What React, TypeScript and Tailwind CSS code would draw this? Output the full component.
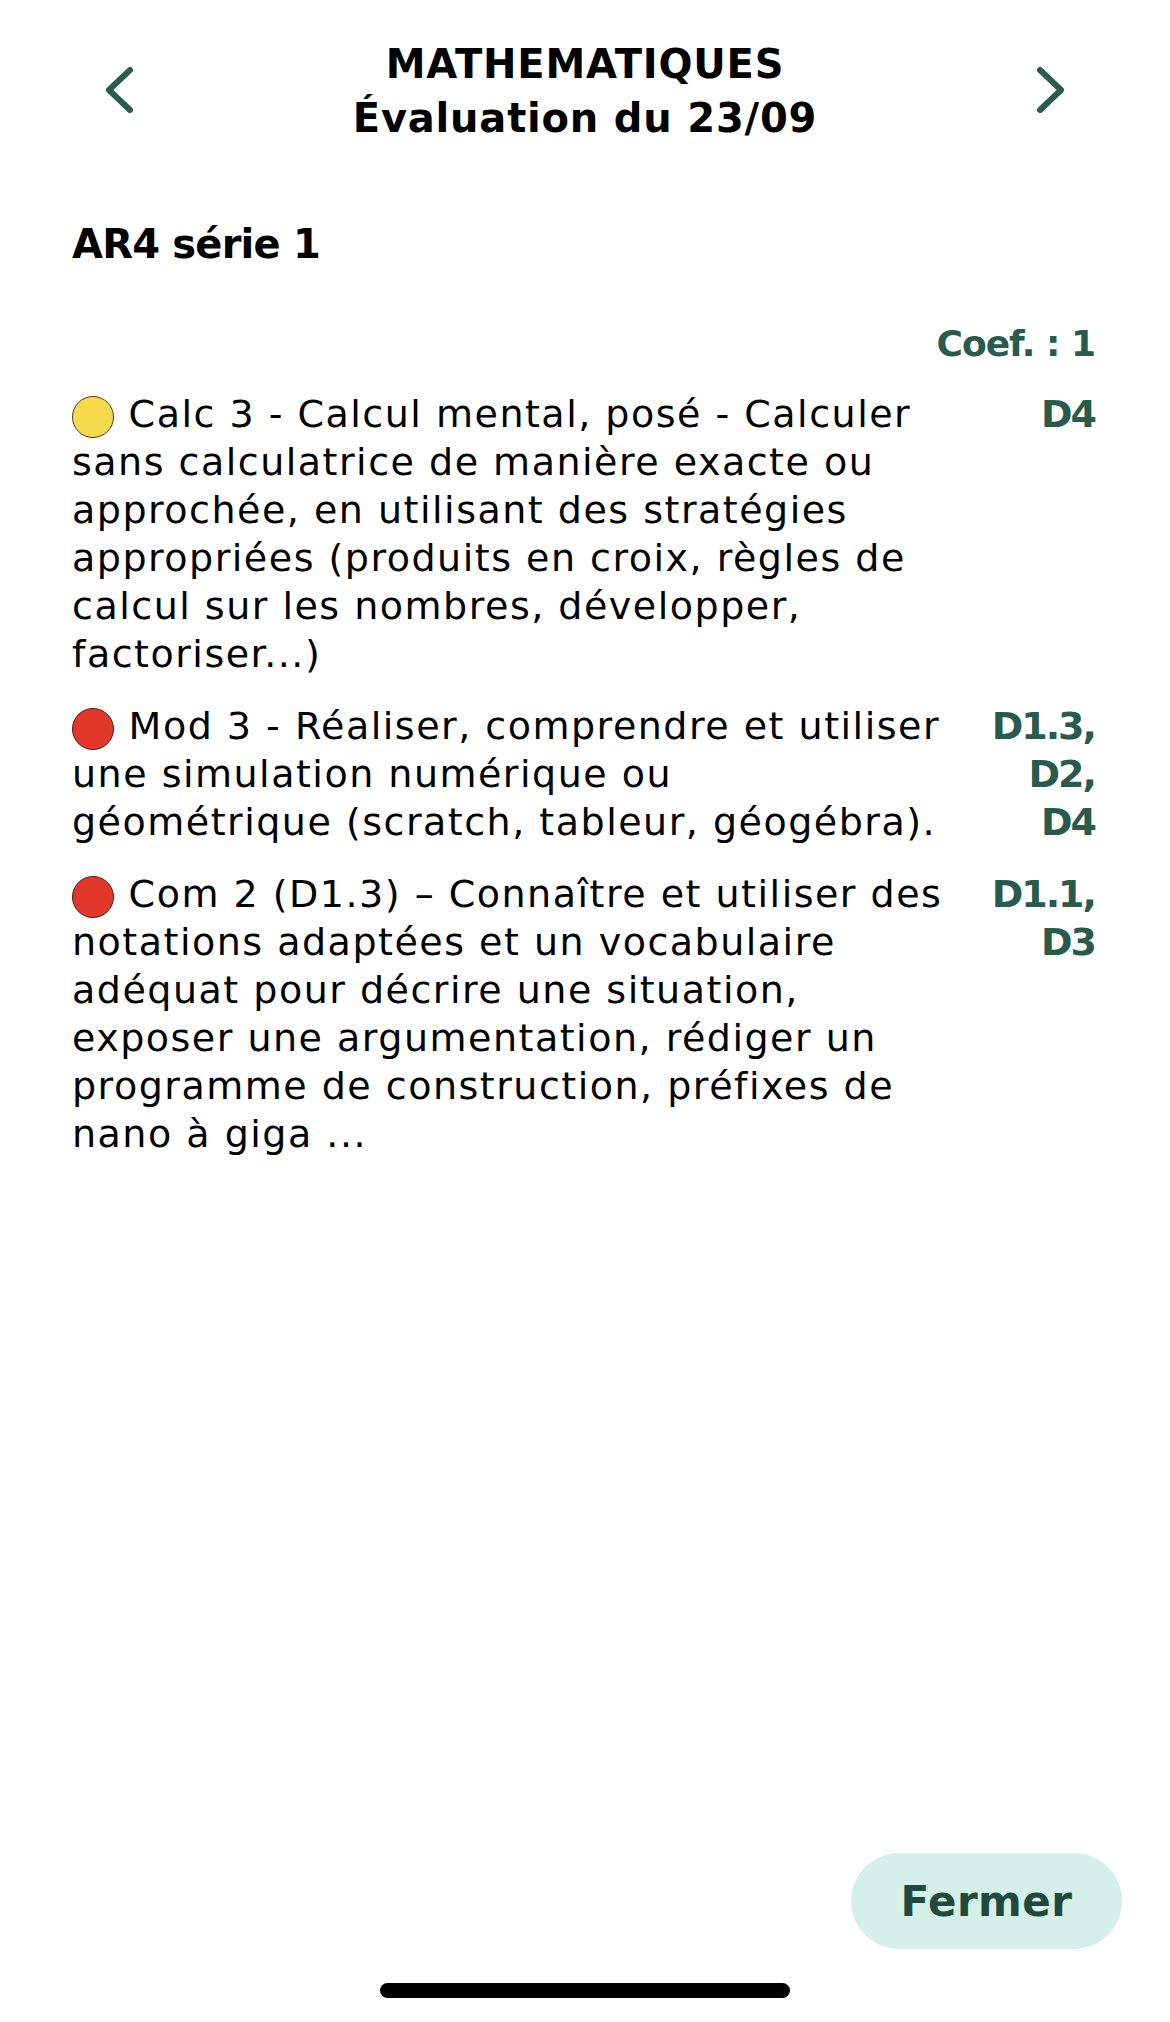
import React from "react";

type Item = {
  color: "yellow" | "red";
  lines: string[];
  domains: string[];
};

const items: Item[] = [
  {
    color: "yellow",
    lines: [
      "Calc 3 - Calcul mental, posé - Calculer",
      "sans calculatrice de manière exacte ou",
      "approchée, en utilisant des stratégies",
      "appropriées (produits en croix, règles de",
      "calcul sur les nombres, développer,",
      "factoriser...)",
    ],
    domains: ["D4"],
  },
  {
    color: "red",
    lines: [
      "Mod 3 - Réaliser, comprendre et utiliser",
      "une simulation numérique ou",
      "géométrique (scratch, tableur, géogébra).",
    ],
    domains: ["D1.3,", "D2,", "D4"],
  },
  {
    color: "red",
    lines: [
      "Com 2 (D1.3) – Connaître et utiliser des",
      "notations adaptées et un vocabulaire",
      "adéquat pour décrire une situation,",
      "exposer une argumentation, rédiger un",
      "programme de construction, préfixes de",
      "nano à giga ...",
    ],
    domains: ["D1.1,", "D3"],
  },
];

function Chevron({ dir }: { dir: "left" | "right" }) {
  return (
    <svg width="34" height="52" viewBox="0 0 34 52" fill="none" className="shrink-0">
      <polyline
        points={dir === "left" ? "27,6 6,26 27,46" : "7,6 28,26 7,46"}
        stroke="#2a5b4d"
        strokeWidth="6"
        strokeLinecap="round"
        strokeLinejoin="round"
      />
    </svg>
  );
}

function Dot({ color }: { color: "yellow" | "red" }) {
  return (
    <span
      className={
        color === "yellow"
          ? "inline-block align-middle w-[42px] h-[42px] rounded-full bg-[#f7d94c] border-[1.5px] border-[#4a4320] mr-[1px]"
          : "inline-block align-middle w-[42px] h-[42px] rounded-full bg-[#e2382b] border-[1.5px] border-[#5a1a14] mr-[1px]"
      }
    />
  );
}

export default function App() {
  return (
    <div className="w-[1170px] h-[2022px] bg-white flex flex-col font-['DejaVu_Sans',sans-serif] text-black">
      <header className="flex justify-between items-start px-[103px] pt-[37px]">
        <div className="mt-[27px]">
          <Chevron dir="left" />
        </div>
        <h1 className="flex-1 text-center font-bold text-[40px] leading-[54px] tracking-[0.8px]">
          MATHEMATIQUES
          <br />
          Évaluation du 23/09
        </h1>
        <div className="mt-[27px]">
          <Chevron dir="right" />
        </div>
      </header>

      <main className="pl-[72px] pr-[75px]">
        <h2 className="mt-[75px] font-bold text-[40px] leading-[48px] tracking-[-0.8px]">AR4 série 1</h2>

        <p className="mt-[52px] text-right font-bold text-[36px] leading-[48px] tracking-[-1px] text-[#285b4c]">
          Coef. : 1
        </p>

        <div className="mt-[22px] flex flex-col gap-[24px]">
          {items.map((item, i) => (
            <div key={i} className="flex items-start">
              <div className="flex-1 text-[38px] leading-[48px] tracking-[1.5px] whitespace-nowrap">
                {item.lines.map((line, j) => (
                  <div key={j}>
                    {j === 0 && (
                      <>
                        <Dot color={item.color} />{" "}
                      </>
                    )}
                    {line}
                  </div>
                ))}
              </div>
              <div className="w-[120px] text-right font-bold text-[38px] leading-[48px] tracking-[-2px] text-[#285b4c]">
                {item.domains.map((d) => (
                  <div key={d}>{d}</div>
                ))}
              </div>
            </div>
          ))}
        </div>
      </main>

      <footer className="mt-auto flex flex-col">
        <div className="flex justify-end pr-[48px]">
          <button className="w-[271px] h-[96px] rounded-full bg-[#d5efe9] text-[#1d4a3d] font-bold text-[42px] tracking-[0.5px]">
            Fermer
          </button>
        </div>
        <div className="mt-[34px] mb-[24px] mx-auto w-[410px] h-[15px] rounded-full bg-black" />
      </footer>
    </div>
  );
}
